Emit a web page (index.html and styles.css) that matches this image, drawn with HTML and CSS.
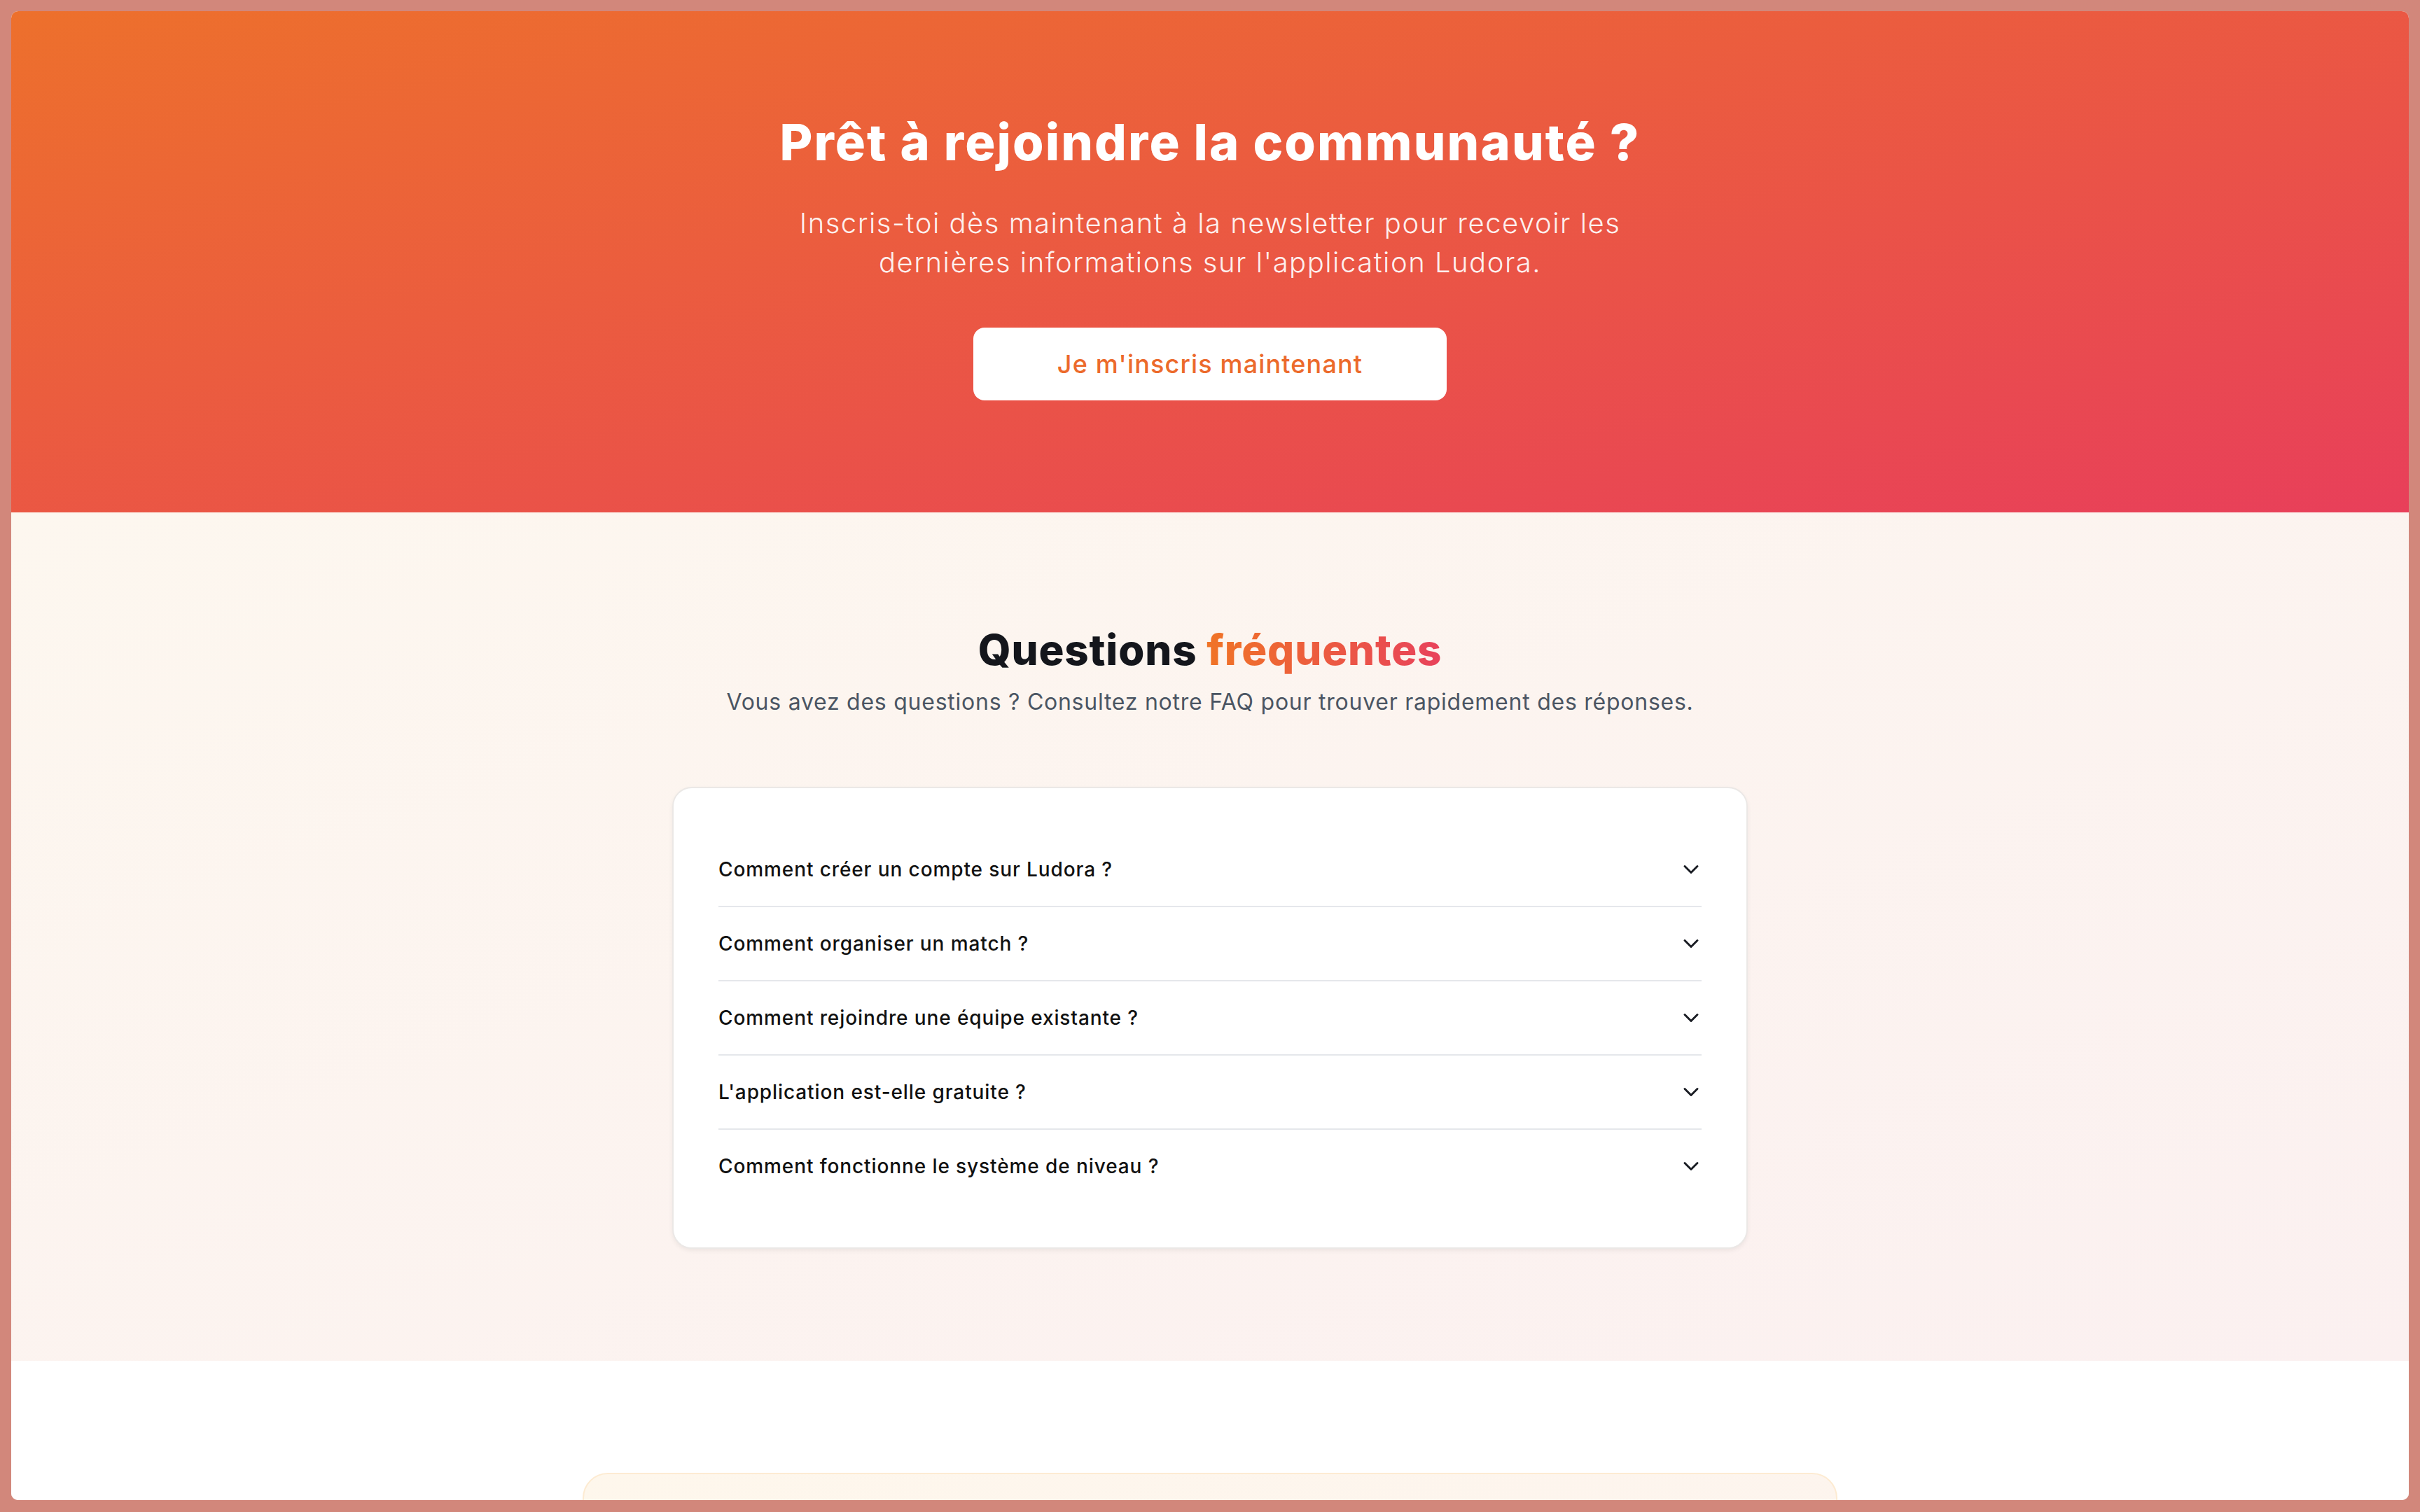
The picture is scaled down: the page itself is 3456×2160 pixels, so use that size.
FILE: index.html
```html
<!DOCTYPE html>
<html lang="fr">
<head>
<meta charset="utf-8">
<title>Ludora</title>
<link rel="stylesheet" href="styles.css">
</head>
<body>
<div class="window">
  <section class="hero">
    <h1 class="hero-title">Prêt à rejoindre la communauté ?</h1>
    <p class="hero-text">Inscris-toi dès maintenant à la newsletter pour recevoir les dernières informations sur l'application Ludora.</p>
    <a class="hero-btn" href="#">Je m'inscris maintenant</a>
  </section>

  <section class="faq">
    <h2 class="faq-title">Questions <span class="accent">fréquentes</span></h2>
    <p class="faq-sub">Vous avez des questions ? Consultez notre FAQ pour trouver rapidement des réponses.</p>
    <div class="faq-card">
      <div class="faq-item">
        <span class="faq-q">Comment créer un compte sur Ludora ?</span>
        <svg class="chev" viewBox="0 0 24 24"><path d="m6 9 6 6 6-6"/></svg>
      </div>
      <div class="faq-item">
        <span class="faq-q">Comment organiser un match ?</span>
        <svg class="chev" viewBox="0 0 24 24"><path d="m6 9 6 6 6-6"/></svg>
      </div>
      <div class="faq-item">
        <span class="faq-q">Comment rejoindre une équipe existante ?</span>
        <svg class="chev" viewBox="0 0 24 24"><path d="m6 9 6 6 6-6"/></svg>
      </div>
      <div class="faq-item">
        <span class="faq-q">L'application est-elle gratuite ?</span>
        <svg class="chev" viewBox="0 0 24 24"><path d="m6 9 6 6 6-6"/></svg>
      </div>
      <div class="faq-item">
        <span class="faq-q">Comment fonctionne le système de niveau ?</span>
        <svg class="chev" viewBox="0 0 24 24"><path d="m6 9 6 6 6-6"/></svg>
      </div>
    </div>
  </section>

  <section class="next">
    <div class="next-card"></div>
  </section>
</div>
</body>
</html>
```

FILE: styles.css
```css
* { box-sizing: border-box; }

html, body {
  margin: 0;
  padding: 0;
}

body {
  background: #d2877b;
  padding: 16px 16px 17px 16px;
  font-family: "Inter", "Noto Sans", sans-serif;
}

.window {
  height: 2127px;
  background: #ffffff;
  border-radius: 10px;
  overflow: hidden;
  display: flex;
  flex-direction: column;
}

/* HERO */
.hero {
  height: 716px;
  flex: none;
  padding: 147px 0 0 0;
  background: linear-gradient(to bottom right, #ed702c, #e83f5a);
  display: flex;
  flex-direction: column;
  align-items: center;
  text-align: center;
}

.hero-title {
  margin: 0;
  color: #ffffff;
  font-size: 72px;
  line-height: 80px;
  font-weight: 800;
  letter-spacing: 2.1px;
}

.hero-text {
  margin: 48px 0 0 0;
  max-width: 1260px;
  color: rgba(255, 255, 255, 0.92);
  font-size: 40px;
  line-height: 56px;
  font-weight: 300;
  letter-spacing: 1.5px;
}

.hero-btn {
  margin-top: 65px;
  display: block;
  height: 104px;
  padding: 24px 120px;
  background: #ffffff;
  border-radius: 16px;
  color: #ec6a2b;
  font-size: 36px;
  line-height: 56px;
  font-weight: 500;
  letter-spacing: 1.15px;
  text-decoration: none;
}

/* FAQ */
.faq {
  height: 1212px;
  flex: none;
  padding: 160px 0 0 0;
  background: linear-gradient(to bottom right, #fdf7ef, #fbf0f0);
  display: flex;
  flex-direction: column;
  align-items: center;
  text-align: center;
}

.faq-title {
  margin: 0;
  color: #14161c;
  font-size: 60px;
  line-height: 72px;
  font-weight: 800;
  letter-spacing: 0.85px;
}

.accent {
  background: linear-gradient(to right, #f07426, #e8425b);
  -webkit-background-clip: text;
  background-clip: text;
  color: transparent;
}

.faq-sub {
  margin: 15px 0 0 0;
  color: #4b5563;
  font-size: 32px;
  line-height: 48px;
  font-weight: 400;
  letter-spacing: 0.75px;
}

.faq-card {
  margin-top: 97px;
  width: 1536px;
  background: #ffffff;
  border: 2px solid #ebe8e6;
  border-radius: 28px;
  box-shadow: 0 3px 6px rgba(0, 0, 0, 0.06);
  padding: 64px;
  text-align: left;
}

.faq-item {
  display: flex;
  align-items: center;
  justify-content: space-between;
  padding: 32px 0;
  border-bottom: 2px solid #e5e7eb;
}

.faq-item:last-child {
  border-bottom: none;
}

.faq-q {
  color: #111111;
  font-size: 28px;
  line-height: 40px;
  font-weight: 500;
  letter-spacing: 0.9px;
}

.chev {
  width: 36px;
  height: 36px;
  margin-right: -3px;
  fill: none;
  stroke: #1a1d24;
  stroke-width: 2;
  stroke-linecap: round;
  stroke-linejoin: round;
}

/* NEXT SECTION */
.next {
  flex: 1;
  padding-top: 160px;
  display: flex;
  justify-content: center;
  background: #ffffff;
}

.next-card {
  width: 1792px;
  height: 600px;
  background: linear-gradient(to bottom right, #fef7ec, #fcf2ef);
  border: 2px solid #fdebd2;
  border-radius: 36px;
}
```
